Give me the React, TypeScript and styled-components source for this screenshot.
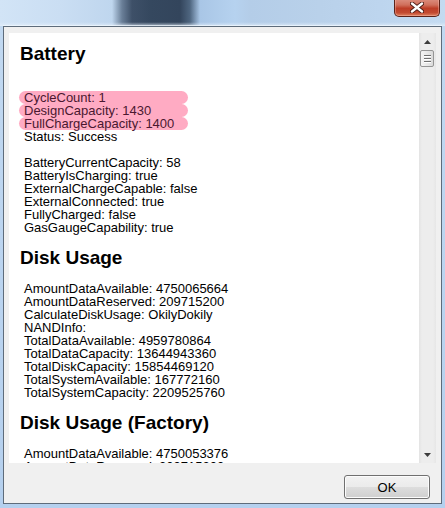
import React from 'react';
import styled, { createGlobalStyle } from 'styled-components';

const GlobalStyle = createGlobalStyle`
    html, body {
        margin: 0;
        padding: 0;
        background: #bcd5ef;
    }
`;

interface Section {
    title: string;
    lines: string[];
    marked?: number[];
}

// empty strings render as blank lines, like the original text dump
const sections: Section[] = [
    {
        title: 'Battery',
        lines: [
            '',
            'CycleCount: 1',
            'DesignCapacity: 1430',
            'FullChargeCapacity: 1400',
            'Status: Success',
            '',
            'BatteryCurrentCapacity: 58',
            'BatteryIsCharging: true',
            'ExternalChargeCapable: false',
            'ExternalConnected: true',
            'FullyCharged: false',
            'GasGaugeCapability: true',
        ],
        marked: [1, 2, 3],
    },
    {
        title: 'Disk Usage',
        lines: [
            'AmountDataAvailable: 4750065664',
            'AmountDataReserved: 209715200',
            'CalculateDiskUsage: OkilyDokily',
            'NANDInfo:',
            'TotalDataAvailable: 4959780864',
            'TotalDataCapacity: 13644943360',
            'TotalDiskCapacity: 15854469120',
            'TotalSystemAvailable: 167772160',
            'TotalSystemCapacity: 2209525760',
        ],
    },
    {
        title: 'Disk Usage (Factory)',
        lines: [
            'AmountDataAvailable: 4750053376',
            'AmountDataReserved: 209715200',
        ],
    },
];

const Screen = styled.div`
    width: 445px;
    height: 508px;
    box-sizing: border-box;
    display: flex;
    flex-direction: column;
    background: linear-gradient(to bottom, #c2d9f1 0%, #b5d0ee 100%);
    overflow: hidden;
`;

const TitleBar = styled.div`
    height: 26px;
    flex: none;
    display: flex;
    justify-content: flex-end;
    align-items: flex-start;
    padding-right: 5px;
    background:
        linear-gradient(to bottom, rgba(255,255,255,0) 0%, rgba(255,255,255,0) 85%, rgba(230,240,250,0.7) 100%),
        linear-gradient(to right,
            #d2e4f6 0px,
            #cadef3 60px,
            #bfd6ee 112px,
            #6a7f98 122px,
            #3e5068 132px,
            #35485f 150px,
            #33455c 180px,
            #4f6680 190px,
            #a9c6e6 200px,
            #b6d2ef 235px,
            #b4cde8 250px,
            #b9d1ea 320px,
            #bdd5ee 380px,
            #c4dbf1 445px);
`;

const CloseButton = styled.div`
    width: 46px;
    height: 18px;
    margin-top: -1px;
    box-sizing: border-box;
    border: 1px solid #5b2219;
    border-top: none;
    border-radius: 0 0 5px 5px;
    background: linear-gradient(to bottom, #dc8f80 0%, #d06f5c 35%, #bd3d27 55%, #c24a31 80%, #e0805f 100%);
    box-shadow: inset 0 0 0 1px rgba(255, 210, 200, 0.35);
    display: flex;
    align-items: center;
    justify-content: center;
`;

const Panel = styled.div`
    flex: 1;
    margin: 0 3px 4px 3px;
    border: 1px solid #5e6c7b;
    box-shadow: 0 -1px 0 rgba(240, 248, 255, 0.7);
    background: #f0f0f0;
    padding: 6px 5px 0 5px;
    display: flex;
    flex-direction: column;
`;

const Viewer = styled.div`
    height: 430px;
    flex: none;
    display: flex;
`;

const Content = styled.div`
    flex: 1;
    background: #ffffff;
    overflow: hidden;
    padding: 10px 0 0 11px;
`;

const Heading = styled.h2`
    margin: 13px 0 13px 0;
    font-family: "Liberation Sans", Arial, sans-serif;
    font-weight: bold;
    font-size: 19px;
    line-height: 22px;
    color: #000000;

    &:first-child {
        margin-top: 0;
    }
`;

const Lines = styled.div`
    padding-left: 4px;
`;

const Line = styled.div<{ $marked?: boolean }>`
    font-family: "Liberation Sans", Arial, sans-serif;
    font-size: 13px;
    line-height: 13px;
    height: 13px;
    white-space: pre;
    color: ${p => (p.$marked ? '#4a1830' : '#000000')};
    ${p => p.$marked && `
        width: 164px;
        margin-left: -5px;
        padding-left: 5px;
        border-radius: 7px;
        background: #ffabc3;
    `}
`;

const ScrollBar = styled.div`
    width: 17px;
    flex: none;
    display: flex;
    flex-direction: column;
    background: linear-gradient(to right, #e3e3e3 0px, #ededed 3px, #ededed 14px, #e6e6e6 17px);
`;

const ScrollArrow = styled.div`
    height: 17px;
    flex: none;
    display: flex;
    align-items: center;
    justify-content: center;
`;

const Thumb = styled.div`
    height: 17px;
    margin: 0 2px 0 1px;
    box-sizing: border-box;
    border: 1px solid #959595;
    border-radius: 2px;
    background: linear-gradient(to right, #f4f4f4 0%, #e8e8e8 50%, #dadada 100%);
    display: flex;
    flex-direction: column;
    align-items: center;
    justify-content: center;
    gap: 2px;
`;

const Grip = styled.div`
    width: 7px;
    height: 1px;
    background: #6f6f6f;
    box-shadow: 0 1px 0 #ffffff;
`;

const Track = styled.div`
    flex: 1;
`;

const Footer = styled.div`
    height: 40px;
    flex: none;
    display: flex;
    justify-content: flex-end;
    align-items: flex-start;
    padding: 12px 6px 0 0;
    box-sizing: border-box;
`;

const OkButton = styled.button`
    width: 86px;
    height: 24px;
    padding: 0;
    border: 1px solid #707070;
    border-radius: 3px;
    background: linear-gradient(to bottom, #f2f2f2 0%, #ebebeb 50%, #dddddd 51%, #cfcfcf 100%);
    box-shadow: inset 0 0 0 1px #fcfcfc;
    font-family: "Liberation Sans", Arial, sans-serif;
    font-size: 13px;
    color: #000000;
`;

function CloseGlyph() {
    return (
        <svg width="14" height="11" viewBox="0 0 14 11">
            <path d="M2 1.5 L12 9.5 M12 1.5 L2 9.5" stroke="#4a1a14" strokeWidth="4.2" strokeLinecap="round" />
            <path d="M2 1.5 L12 9.5 M12 1.5 L2 9.5" stroke="#ffffff" strokeWidth="2.4" strokeLinecap="round" />
        </svg>
    );
}

function Arrow({ down }: { down?: boolean }) {
    return (
        <svg width="7" height="4" viewBox="0 0 7 4">
            <path d={down ? 'M0 0 L7 0 L3.5 4 Z' : 'M0 4 L7 4 L3.5 0 Z'} fill="#3c3c3c" />
        </svg>
    );
}

export default function App() {
    return (
        <>
            <GlobalStyle />
            <Screen>
                <TitleBar>
                    <CloseButton>
                        <CloseGlyph />
                    </CloseButton>
                </TitleBar>
                <Panel>
                    <Viewer>
                        <Content>
                            {sections.map(section => (
                                <React.Fragment key={section.title}>
                                    <Heading>{section.title}</Heading>
                                    <Lines>
                                        {section.lines.map((line, i) => (
                                            <Line key={i} $marked={section.marked?.includes(i)}>
                                                {line}
                                            </Line>
                                        ))}
                                    </Lines>
                                </React.Fragment>
                            ))}
                        </Content>
                        <ScrollBar>
                            <ScrollArrow><Arrow /></ScrollArrow>
                            <Thumb>
                                <Grip />
                                <Grip />
                                <Grip />
                            </Thumb>
                            <Track />
                            <ScrollArrow><Arrow down /></ScrollArrow>
                        </ScrollBar>
                    </Viewer>
                    <Footer>
                        <OkButton>OK</OkButton>
                    </Footer>
                </Panel>
            </Screen>
        </>
    );
}
